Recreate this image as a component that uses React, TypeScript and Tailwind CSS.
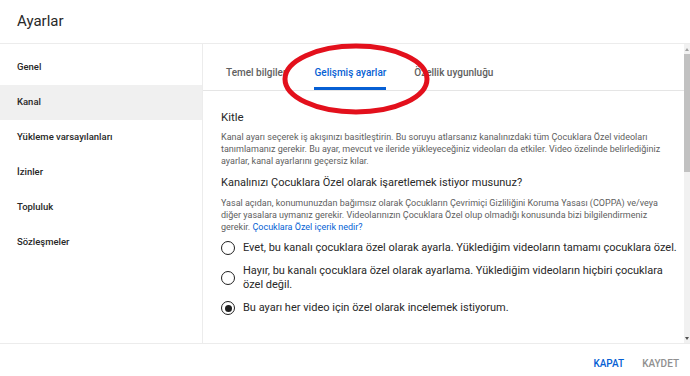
import React from 'react';

const sidebarItems = ['Genel', 'Kanal', 'Yükleme varsayılanları', 'İzinler', 'Topluluk', 'Sözleşmeler'];

const tabs = [
  { label: 'Temel bilgiler', active: false },
  { label: 'Gelişmiş ayarlar', active: true },
  { label: 'Özellik uygunluğu', active: false },
];

const options = [
  {
    label: 'Evet, bu kanalı çocuklara özel olarak ayarla. Yüklediğim videoların tamamı çocuklara özel.',
    checked: false,
  },
  {
    label: 'Hayır, bu kanalı çocuklara özel olarak ayarlama. Yüklediğim videoların hiçbiri çocuklara özel değil.',
    checked: false,
  },
  { label: 'Bu ayarı her video için özel olarak incelemek istiyorum.', checked: true },
];

function Radio({ checked }: { checked: boolean }) {
  return (
    <div className="w-[14px] h-[14px] shrink-0 rounded-full border-[1.5px] border-[#1f1f1f] flex items-center justify-center">
      {checked && <div className="w-[7px] h-[7px] rounded-full bg-[#1f1f1f]" />}
    </div>
  );
}

export default function App() {
  return (
    <div
      className="relative w-[690px] h-[376px] bg-white flex flex-col overflow-hidden text-[#282828]"
      style={{ fontFamily: 'Roboto, "Noto Sans", sans-serif' }}
    >
      {/* başlık */}
      <div className="h-[44px] shrink-0 border-b border-[#ececec] flex items-center pl-[17px]">
        <h1 className="text-[15px] leading-none text-[#282828]">Ayarlar</h1>
      </div>

      <div className="flex flex-1 min-h-0">
        {/* yan menü */}
        <div className="w-[203px] shrink-0 border-r border-[#ececec] pt-[6px]">
          {sidebarItems.map((item) => (
            <div
              key={item}
              className={`h-[35px] flex items-center pl-[17px] text-[9.5px] font-medium ${
                item === 'Kanal' ? 'bg-[#f0f0f0]' : ''
              }`}
            >
              {item}
            </div>
          ))}
        </div>

        {/* içerik */}
        <div className="flex-1 flex min-w-0">
          <div className="flex-1 min-w-0 flex flex-col">
            <div className="h-[47px] shrink-0 border-b border-[#e5e5e5] flex gap-[28px] pl-[23px]">
              {tabs.map((t) => (
                <div
                  key={t.label}
                  className={`h-full pt-[22px] text-[10px] font-medium leading-[14px] ${
                    t.active ? 'text-[#065fd4] border-b-[3px] border-[#065fd4]' : 'text-[#606060]'
                  }`}
                >
                  {t.label}
                </div>
              ))}
            </div>

            <div className="pl-[18px] pr-[6px] pt-[16px]">
              <h2 className="text-[11.5px] leading-[20px]">Kitle</h2>
              <p className="text-[9px] leading-[12px] text-[#606060] w-[446px] mt-[4px]">
                Kanal ayarı seçerek iş akışınızı basitleştirin. Bu soruyu atlarsanız kanalınızdaki tüm Çocuklara Özel
                videoları tanımlamanız gerekir. Bu ayar, mevcut ve ileride yükleyeceğiniz videoları da etkiler. Video
                özelinde belirlediğiniz ayarlar, kanal ayarlarını geçersiz kılar.
              </p>
              <h3 className="text-[11px] leading-[20px] mt-[6px]">
                Kanalınızı Çocuklara Özel olarak işaretlemek istiyor musunuz?
              </h3>
              <p className="text-[9px] leading-[12px] text-[#606060] w-[446px] mt-[4px]">
                Yasal açıdan, konumunuzdan bağımsız olarak Çocukların Çevrimiçi Gizliliğini Koruma Yasası (COPPA) ve/veya
                diğer yasalara uymanız gerekir. Videolarınızın Çocuklara Özel olup olmadığı konusunda bizi
                bilgilendirmeniz gerekir. <span className="text-[#065fd4]">Çocuklara Özel içerik nedir?</span>
              </p>
              <div className="mt-[8px] flex flex-col gap-[9px]">
                {options.map((o) => (
                  <div key={o.label} className="flex items-center gap-[8px]">
                    <Radio checked={o.checked} />
                    <span className="text-[11px] leading-[14px] text-[#282828]">{o.label}</span>
                  </div>
                ))}
              </div>
            </div>
          </div>

          {/* kaydırma çubuğu */}
          <div className="w-[6px] shrink-0 bg-[#f1f1f1] flex flex-col items-center">
            <div className="h-[10px] flex items-center justify-center">
              <div className="w-0 h-0 border-l-[2px] border-r-[2px] border-b-[3px] border-l-transparent border-r-transparent border-b-[#a3a3a3]" />
            </div>
            <div className="w-full h-[118px] bg-[#c1c1c1]" />
            <div className="flex-1" />
            <div className="h-[10px] flex items-center justify-center">
              <div className="w-0 h-0 border-l-[2px] border-r-[2px] border-t-[3px] border-l-transparent border-r-transparent border-t-[#505050]" />
            </div>
          </div>
        </div>
      </div>

      {/* alt bar */}
      <div className="h-[33px] shrink-0 border-t border-[#ececec] flex items-center justify-end gap-[18px] pr-[11px] pt-[6px] text-[10px] font-medium">
        <span className="text-[#065fd4]">KAPAT</span>
        <span className="text-[#909090]">KAYDET</span>
      </div>

      {/* kırmızı işaret */}
      <svg className="absolute left-[280px] top-[42px]" width="152" height="76" viewBox="0 0 152 76">
        <ellipse cx="76" cy="37" rx="71" ry="33" fill="none" stroke="#e3101c" strokeWidth="5" />
      </svg>
    </div>
  );
}
